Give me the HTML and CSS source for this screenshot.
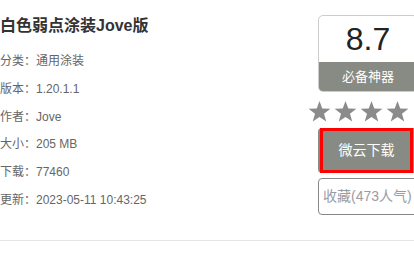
FILE: index.html
```html
<!DOCTYPE html>
<html lang="zh-CN">
<head>
<meta charset="utf-8">
<title>白色弱点涂装Jove版</title>
<link rel="stylesheet" href="styles.css">
</head>
<body>
<div class="detail">
  <div class="info">
    <h1 class="title">白色弱点涂装Jove版</h1>
    <ul class="meta">
      <li>分类：通用涂装</li>
      <li>版本：1.20.1.1</li>
      <li>作者：Jove</li>
      <li>大小：205 MB</li>
      <li>下载：77460</li>
      <li>更新：2023-05-11 10:43:25</li>
    </ul>
  </div>
  <div class="side">
    <div class="score">
      <div class="score-num">8.7</div>
      <div class="score-tag">必备神器</div>
    </div>
    <div class="stars">
      <svg class="star" viewBox="0 0 24 22"><polygon points="12,0 14.9,7.9 23.4,8.2 16.7,13.4 19.1,21.6 12,16.8 4.9,21.6 7.3,13.4 0.6,8.2 9.1,7.9"/></svg>
      <svg class="star" viewBox="0 0 24 22"><polygon points="12,0 14.9,7.9 23.4,8.2 16.7,13.4 19.1,21.6 12,16.8 4.9,21.6 7.3,13.4 0.6,8.2 9.1,7.9"/></svg>
      <svg class="star" viewBox="0 0 24 22"><polygon points="12,0 14.9,7.9 23.4,8.2 16.7,13.4 19.1,21.6 12,16.8 4.9,21.6 7.3,13.4 0.6,8.2 9.1,7.9"/></svg>
      <svg class="star" viewBox="0 0 24 22"><polygon points="12,0 14.9,7.9 23.4,8.2 16.7,13.4 19.1,21.6 12,16.8 4.9,21.6 7.3,13.4 0.6,8.2 9.1,7.9"/></svg>
    </div>
    <a class="download" href="#"><span class="download-inner">微云下载</span></a>
    <div class="fav">收藏(473人气)</div>
  </div>
</div>
</body>
</html>
```

FILE: styles.css
```css
html, body {
  margin: 0;
  padding: 0;
  overflow: hidden;
  background: #fff;
}
body {
  font-family: "Liberation Sans", "Noto Sans CJK SC", sans-serif;
  color: #333;
  width: 414px;
  height: 277px;
}
.detail {
  display: flex;
  justify-content: space-between;
  height: 241px;
  border-bottom: 1px solid #e5e5e5;
  box-sizing: border-box;
}
.info {
  padding-top: 14px;
}
.title {
  margin: 0;
  font-size: 16px;
  line-height: 24px;
  font-weight: bold;
  color: #333;
}
.meta {
  list-style: none;
  margin: 10px 0 0;
  padding: 0;
}
.meta li {
  font-size: 12px;
  line-height: 27.8px;
  color: #666;
}
.side {
  width: 100px;
  flex-shrink: 0;
  margin-right: -4px;
  padding-top: 15px;
}
.score {
  border: 1px solid #ccc;
  border-radius: 5px;
  overflow: hidden;
  text-align: center;
}
.score-num {
  height: 46px;
  line-height: 46px;
  font-size: 32px;
  color: #222;
}
.score-tag {
  height: 29px;
  line-height: 29px;
  background: #878b84;
  color: #fff;
  font-size: 13px;
}
.stars {
  display: flex;
  gap: 1px;
  margin: 9px 0 0 -11px;
  height: 24px;
}
.star {
  width: 25px;
  height: 21px;
  fill: #898c88;
}
.download {
  display: block;
  margin-top: 3px;
  height: 45px;
  background: #878b84;
  border-radius: 4px;
  text-decoration: none;
  position: relative;
}
.download-inner {
  position: absolute;
  left: 2px;
  top: 0;
  width: 93px;
  height: 45px;
  box-sizing: border-box;
  border: 3px solid #f00;
  color: #fff;
  font-size: 14px;
  line-height: 39px;
  text-align: center;
}
.fav {
  margin-top: 5px;
  height: 37px;
  box-sizing: border-box;
  border: 1px solid #888;
  border-radius: 4px;
  padding-left: 4px;
  font-size: 14px;
  line-height: 35px;
  color: #9a9ca3;
  white-space: nowrap;
  overflow: hidden;
}
```
